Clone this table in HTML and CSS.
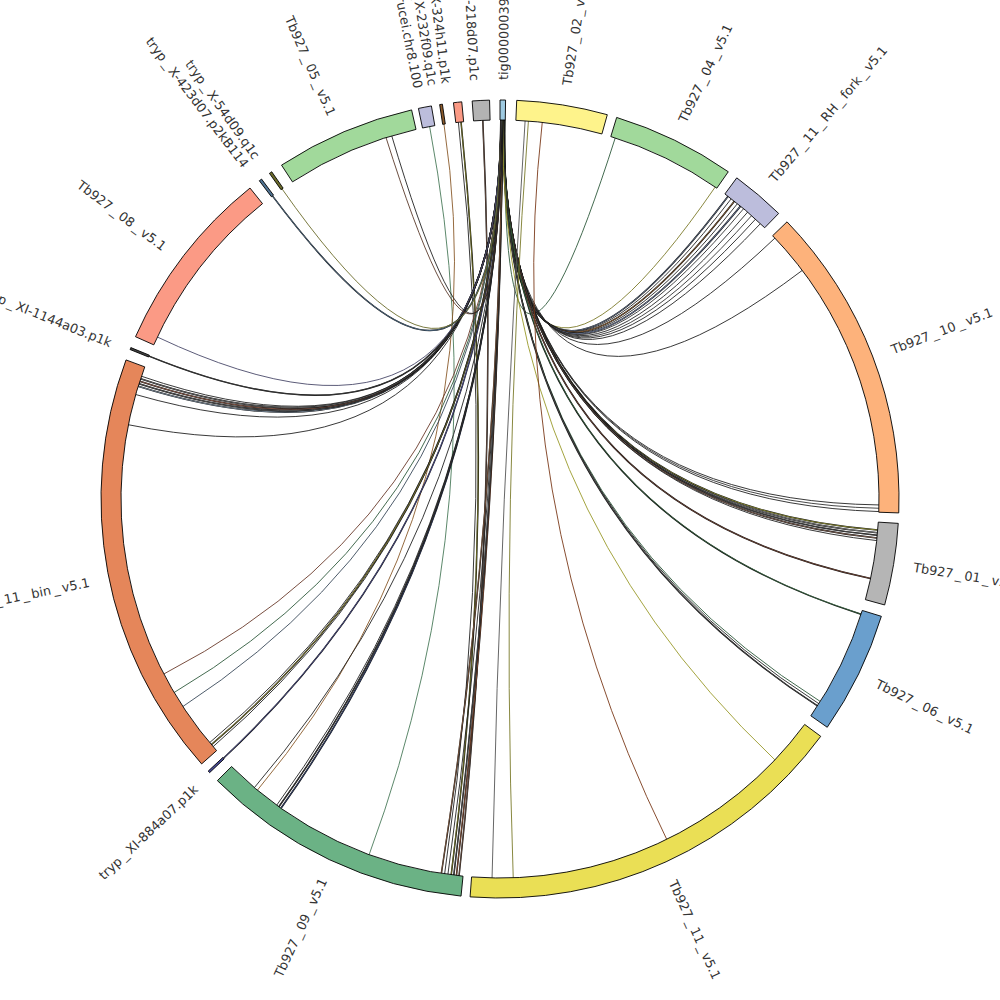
FILE: index.html
```html
<!DOCTYPE html>
<html lang="en">
<head>
<meta charset="utf-8">
<title>Circos link plot</title>
<link rel="stylesheet" href="styles.css">
</head>
<body>
<main class="canvas">
  <svg id="plot" class="plot" width="1000" height="1000" viewBox="0 0 1000 1000">
    <g id="links"></g>
    <g id="ideos"></g>
    <g id="labels">
      <text class="lbl" data-a="0.4">tig00000039</text>
      <text class="lbl" data-a="9.1">Tb927_02_v5.1</text>
      <text class="lbl" data-a="25.7">Tb927_04_v5.1</text>
      <text class="lbl" data-a="40.4">Tb927_11_RH_fork_v5.1</text>
      <text class="lbl" data-a="69.1">Tb927_10_v5.1</text>
      <text class="lbl" data-a="99.3">Tb927_01_v5.1</text>
      <text class="lbl" data-a="116">Tb927_06_v5.1</text>
      <text class="lbl" data-a="155.6">Tb927_11_v5.1</text>
      <text class="lbl" data-a="205">Tb927_09_v5.1</text>
      <text class="lbl" data-a="226.6">tryp_XI-884a07.p1k</text>
      <text class="lbl" data-a="258.6">Tb927_11_bin_v5.1</text>
      <text class="lbl" data-a="291.9">tryp_XI-1144a03.p1k</text>
      <text class="lbl" data-a="306.9">Tb927_08_v5.1</text>
      <text class="lbl" data-a="322.7">tryp_X-423d07.p2kB114</text>
      <text class="lbl" data-a="324.6">tryp_X-54d09.q1c</text>
      <text class="lbl" data-a="336.4">Tb927_05_v5.1</text>
      <text class="lbl" data-a="348.8">T.brucei.chr8.100</text>
      <text class="lbl" data-a="350.8">tryp_X-232f09.q1c</text>
      <text class="lbl" data-a="352.7">tryp_X-324h11.p1k</text>
      <text class="lbl" data-a="356.6">tryp_Xo-218d07.p1c</text>
    </g>
  </svg>
</main>
<script src="script.js"></script>
</body>
</html>
```

FILE: styles.css
```css
html, body {
  margin: 0;
  padding: 0;
  background: #ffffff;
}

.canvas {
  width: 1000px;
  height: 1000px;
  overflow: hidden;
}

.plot {
  display: block;
}

.lbl {
  font-family: "DejaVu Sans", "Liberation Sans", sans-serif;
  font-size: 12.8px;
  fill: #333333;
  dominant-baseline: central;
}

.lbl .us {
  fill: #444444;
}

.ideo {
  stroke: #000000;
  stroke-width: 0.9;
  stroke-linejoin: miter;
}

.link {
  fill: none;
  stroke-width: 0.9;
}

.link-edge {
  fill: none;
  stroke: #111111;
}

.link-fill {
  fill: none;
}
```

FILE: script.js
```javascript
(function () {
  var NS = "http://www.w3.org/2000/svg";
  var CX = 500, CY = 499, RI = 379, RO = 399, RL = 419;
  var GAP = 2.5;

  function pt(r, a) {
    var t = a * Math.PI / 180;
    return [CX + r * Math.sin(t), CY - r * Math.cos(t)];
  }
  function P(p) { return p[0].toFixed(2) + " " + p[1].toFixed(2); }
  function el(tag, attrs, parent) {
    var e = document.createElementNS(NS, tag);
    for (var k in attrs) e.setAttribute(k, attrs[k]);
    parent.appendChild(e);
    return e;
  }

  var segments = [
    [0.0, 0.8, "#9ecae1"],
    [2.4, 15.6, "#fef38b"],
    [17.0, 34.9, "#a1d99b"],
    [36.4, 44.3, "#bcbddc"],
    [46.0, 92.0, "#fdb27b"],
    [93.5, 105.4, "#b5b5b5"],
    [107.1, 124.9, "#6a9fcd"],
    [126.5, 184.3, "#eadf55"],
    [185.6, 225.1, "#6bb285"],
    [226.7, 227.0, "#4a4d9a"],
    [228.4, 290.4, "#e5865a"],
    [292.0, 292.3, "#444444"],
    [294.0, 321.2, "#fb9a85"],
    [322.9, 323.3, "#4f7393"],
    [324.7, 325.1, "#6b6b2a"],
    [326.8, 347.2, "#a1d99b"],
    [348.2, 350.1, "#bcbddc"],
    [351.3, 351.7, "#8c5a2a"],
    [353.3, 354.5, "#fb9a85"],
    [356.0, 358.5, "#b3b3b3"]
  ];

  /* [target, width, colour, source (optional; default = tig00000039)] */
  var chords = [
    [17.7, 0, "#2f5a3c"],
    [34.6, 0, "#7d7a2a"],
    [37.0, 0.8, "#6a7a94"], [37.6, 0, "#222222"], [38.2, 0.8, "#9a6a3a"],
    [38.8, 0, "#222222"], [39.4, 0.8, "#7a8ab0"], [40.0, 0, "#333333"],
    [40.8, 0, "#222222"], [41.6, 0, "#333333"], [42.4, 0, "#222222"], [43.4, 0, "#222222"],
    [46.5, 0, "#222222"], [52.9, 0, "#222222"],
    [90.9, 0, "#222222"], [91.4, 0, "#333333"], [91.9, 0, "#222222"],
    [94.7, 0.8, "#9a9a3a"], [95.1, 0.8, "#888888"], [95.5, 0.7, "#555555"],
    [95.9, 0.8, "#8a6a5a"], [96.3, 0, "#222222"],
    [102.1, 0.8, "#7a4a3a"],
    [107.7, 0.7, "#3f7a4c"],
    [122.3, 0, "#2f5a3c"], [122.7, 0, "#222222"], [123.1, 0.7, "#555555"],
    [133.5, 0, "#9a9a2a"],
    [153.9, 0, "#7a3a1a", 6.4],
    [178.0, 0, "#7a7a2a", 4.3],
    [181.2, 0, "#555555", 3.8],
    [186.2, 0.7, "#7a5a4a", 357.4],
    [186.6, 0.7, "#a05a3a"], [187.0, 0.7, "#555555"],
    [187.4, 0.7, "#8a8a2a", 354.1],
    [187.9, 0, "#222222"],
    [188.4, 0, "#222222", 353.7],
    [188.9, 0.7, "#9a6a4a"],
    [200.2, 0, "#4a7a5a", 349.3],
    [215.3, 0.8, "#3a4a7a"], [215.7, 0.7, "#444444"], [216.1, 0, "#222222"],
    [219.8, 0, "#8a5a2a", 351.5], [220.4, 0, "#222222"],
    [226.85, 0.7, "#5a5da9"],
    [229.2, 0, "#222222"], [229.6, 0.7, "#b0a83a"], [230.0, 0, "#222222"],
    [236.8, 0, "#3a4a5a"], [239.3, 0, "#2f5a3c"], [242.5, 0, "#6a3a2a"],
    [281.3, 0, "#222222"], [286.0, 0, "#222222"],
    [287.3, 0.9, "#7a8a9a"], [287.7, 0.9, "#555555"], [288.1, 0.9, "#8a5a4a"],
    [288.5, 0.9, "#666666"], [288.9, 0, "#222222"],
    [292.15, 0.7, "#444444"],
    [295.3, 0, "#4a4a6a"],
    [323.1, 0.7, "#5f83a3"], [324.9, 0, "#6b6b2a"],
    [342.5, 0, "#5a3a2a"], [343.4, 0, "#222222"]
  ];

  var links = document.getElementById("links");
  var ideos = document.getElementById("ideos");

  var tig = chords.filter(function (c) { return c[3] === undefined; })
                  .sort(function (x, y) { return x[0] - y[0]; });
  tig.forEach(function (c, i) {
    c[3] = 0.72 - i * (0.64 / (tig.length - 1));
  });

  chords.forEach(function (c) {
    var d = "M " + P(pt(RI, c[3])) + " Q " + CX + " " + CY + " " + P(pt(RI, c[0]));
    if (c[1] > 0) {
      el("path", { d: d, "class": "link-edge", "stroke-width": (c[1] + 0.8).toFixed(2) }, links);
      el("path", { d: d, "class": "link-fill", stroke: c[2], "stroke-width": c[1] }, links);
    } else {
      el("path", { d: d, "class": "link", stroke: c[2] }, links);
    }
  });

  segments.forEach(function (s) {
    var a = s[0], b = s[1];
    var large = (b - a) > 180 ? 1 : 0;
    var d = "M " + P(pt(RO, a)) +
            " A " + RO + " " + RO + " 0 " + large + " 1 " + P(pt(RO, b)) +
            " L " + P(pt(RI, b)) +
            " A " + RI + " " + RI + " 0 " + large + " 0 " + P(pt(RI, a)) + " Z";
    el("path", { d: d, fill: s[2], "class": "ideo" }, ideos);
  });

  var labels = document.querySelectorAll(".lbl");
  Array.prototype.forEach.call(labels, function (t) {
    var a = parseFloat(t.getAttribute("data-a"));
    var p = pt(RL, a);

    /* underscores are set with a little air around them */
    var parts = t.textContent.split("_");
    t.textContent = "";
    parts.forEach(function (part, i) {
      if (i > 0) {
        var u = el("tspan", { "class": "us", dx: GAP }, t);
        u.textContent = "_";
      }
      var s = el("tspan", i > 0 ? { dx: GAP } : {}, t);
      s.textContent = part;
    });

    t.setAttribute("x", p[0].toFixed(2));
    t.setAttribute("y", p[1].toFixed(2));
    if (a < 180) {
      t.setAttribute("text-anchor", "start");
      t.setAttribute("transform", "rotate(" + (a - 90).toFixed(2) + " " + p[0].toFixed(2) + " " + p[1].toFixed(2) + ")");
    } else {
      t.setAttribute("text-anchor", "end");
      t.setAttribute("transform", "rotate(" + (a + 90).toFixed(2) + " " + p[0].toFixed(2) + " " + p[1].toFixed(2) + ")");
    }
  });
})();
```
